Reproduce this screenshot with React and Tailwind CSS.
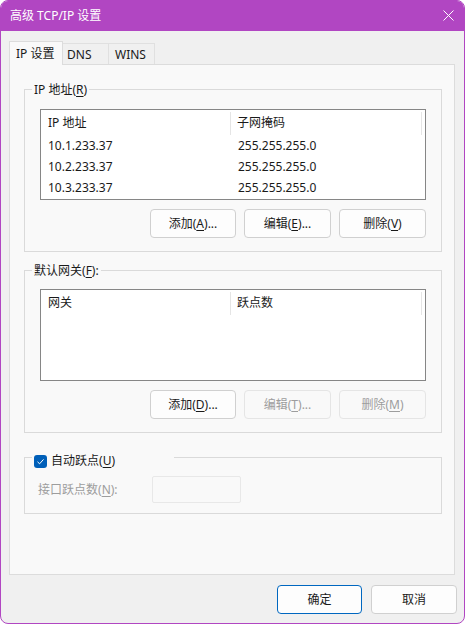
import React from "react";

const FONT = { fontFamily: '"Noto Sans", "Noto Sans CJK SC", sans-serif' };

// Label with an underlined access key, e.g. 添加(A)...
const Key = ({ pre, k, post = "" }) => (
  <span>
    {pre}(<u className="underline underline-offset-2">{k}</u>){post}
  </span>
);

const Button = ({ children, disabled, primary, className = "" }) => (
  <button
    className={`h-[29px] flex items-center justify-center rounded-[4px] border text-[12px] ${
      disabled
        ? "border-[#e5e5e5] bg-[#f9f9f9] text-[#9d9d9d]"
        : primary
        ? "border-[#0067c0] bg-[#fdfdfd] text-[#1a1a1a]"
        : "border-[#d0d0d0] bg-[#fdfdfd] text-[#1a1a1a]"
    } ${className}`}
  >
    {children}
  </button>
);

const ListView = ({ cols, rows, height }) => (
  <div className={`bg-white border border-[#868686] ${height}`}>
    <div className="flex h-[25px] items-center">
      <div className="w-[190px] h-[23px] mt-[1px] flex items-center px-[7px] border-r border-[#e5e5e5]">{cols[0]}</div>
      <div className="w-[191px] h-[23px] mt-[1px] flex items-center px-[6px] border-r border-[#e5e5e5]">{cols[1]}</div>
    </div>
    {rows.map((r, i) => (
      <div key={i} className="flex h-[21px] items-center">
        <div className="w-[190px] px-[7px]">{r[0]}</div>
        <div className="px-[7px]">{r[1]}</div>
      </div>
    ))}
  </div>
);

const GroupBox = ({ label, labelClass = "top-[-9px]", className = "", children }) => (
  <div className={`relative w-[418px] border border-[#dadada] ${className}`}>
    <div className={`absolute left-[7px] h-[18px] px-[2px] bg-[#f9f9f9] flex items-center ${labelClass}`}>
      {label}
    </div>
    {children}
  </div>
);

export default function App() {
  return (
    <div className="w-[465px] h-[624px] bg-white" style={FONT}>
      <div className="w-[465px] h-[624px] flex flex-col rounded-[8px] overflow-hidden border border-[#b146c2] bg-[#f0f0f0] text-[12px] text-[#1a1a1a]">
        {/* Title bar */}
        <div className="h-[30px] shrink-0 bg-[#b146c2] flex items-center justify-between pl-[9px] pr-[10px] text-white">
          <span className="text-[12px]">高级 TCP/IP 设置</span>
          <svg width="11" height="11" viewBox="0 0 11 11" className="mt-[-1px]">
            <path d="M0.5 0.5 L10.5 10.5 M10.5 0.5 L0.5 10.5" stroke="#fff" strokeWidth="1" />
          </svg>
        </div>

        <div className="flex-1 flex flex-col pl-[8px] pr-[9px] pt-[10px]">
          {/* Tabs */}
          <div className="flex items-end h-[23px]">
            <div className="w-[54px] h-[24px] mb-[-1px] relative z-10 bg-[#f9f9f9] border border-b-0 border-[#dcdcdc] flex items-center pl-[6px]">
              IP 设置
            </div>
            <div className="w-[46px] h-[21px] border border-l-0 border-b-0 border-[#e0e0e0] bg-[#f0f0f0] flex items-center pl-[4px] pt-[1px]">
              DNS
            </div>
            <div className="w-[46px] h-[21px] border border-l-0 border-b-0 border-[#e0e0e0] bg-[#f0f0f0] flex items-center pl-[6px] pt-[1px]">
              WINS
            </div>
          </div>

          {/* Tab page */}
          <div className="h-[511px] bg-[#f9f9f9] border border-[#dcdcdc] pl-[14px] pt-[24px]">
            <GroupBox label={<Key pre="IP 地址" k="R" />}>
              <div className="px-[15px] pt-[19px] pb-[13px]">
                <ListView
                  height="h-[91px]"
                  cols={["IP 地址", "子网掩码"]}
                  rows={[
                    ["10.1.233.37", "255.255.255.0"],
                    ["10.2.233.37", "255.255.255.0"],
                    ["10.3.233.37", "255.255.255.0"],
                  ]}
                />
                <div className="flex justify-end gap-[8px] mt-[9px]">
                  <Button className="w-[86px]"><Key pre="添加" k="A" post="..." /></Button>
                  <Button className="w-[87px]"><Key pre="编辑" k="E" post="..." /></Button>
                  <Button className="w-[87px]"><Key pre="删除" k="V" /></Button>
                </div>
              </div>
            </GroupBox>

            <GroupBox label={<Key pre="默认网关" k="F" post=":" />} className="mt-[18px]">
              <div className="px-[15px] pt-[18px] pb-[13px]">
                <ListView height="h-[92px]" cols={["网关", "跃点数"]} rows={[]} />
                <div className="flex justify-end gap-[8px] mt-[9px]">
                  <Button className="w-[86px]"><Key pre="添加" k="D" post="..." /></Button>
                  <Button disabled className="w-[87px]"><Key pre="编辑" k="T" post="..." /></Button>
                  <Button disabled className="w-[87px]"><Key pre="删除" k="M" /></Button>
                </div>
              </div>
            </GroupBox>

            <GroupBox
              className="mt-[24px]"
              labelClass="top-[-6px] w-[142px] gap-[4px]"
              label={
                <>
                  <span className="w-[13px] h-[13px] rounded-[3px] bg-[#005fb8] flex items-center justify-center">
                    <svg width="9" height="9" viewBox="0 0 9 9">
                      <path d="M1.5 4.8 L3.6 6.8 L7.5 2.4" stroke="#fff" strokeWidth="1" fill="none" />
                    </svg>
                  </span>
                  <Key pre="自动跃点" k="U" />
                </>
              }
            >
              <div className="flex items-center pl-[13px] pt-[18px] pb-[10px]">
                <span className="w-[114px] text-[#9d9d9d]"><Key pre="接口跃点数" k="N" post=":" /></span>
                <div className="w-[89px] h-[27px] border border-[#e8e8e8] bg-[#f9f9f9] rounded-[2px]" />
              </div>
            </GroupBox>
          </div>

          {/* Dialog buttons */}
          <div className="flex justify-end gap-[9px] mt-[10px]">
            <Button primary className="w-[85px]">确定</Button>
            <Button className="w-[86px] mr-[-2px]">取消</Button>
          </div>
        </div>
      </div>
    </div>
  );
}
